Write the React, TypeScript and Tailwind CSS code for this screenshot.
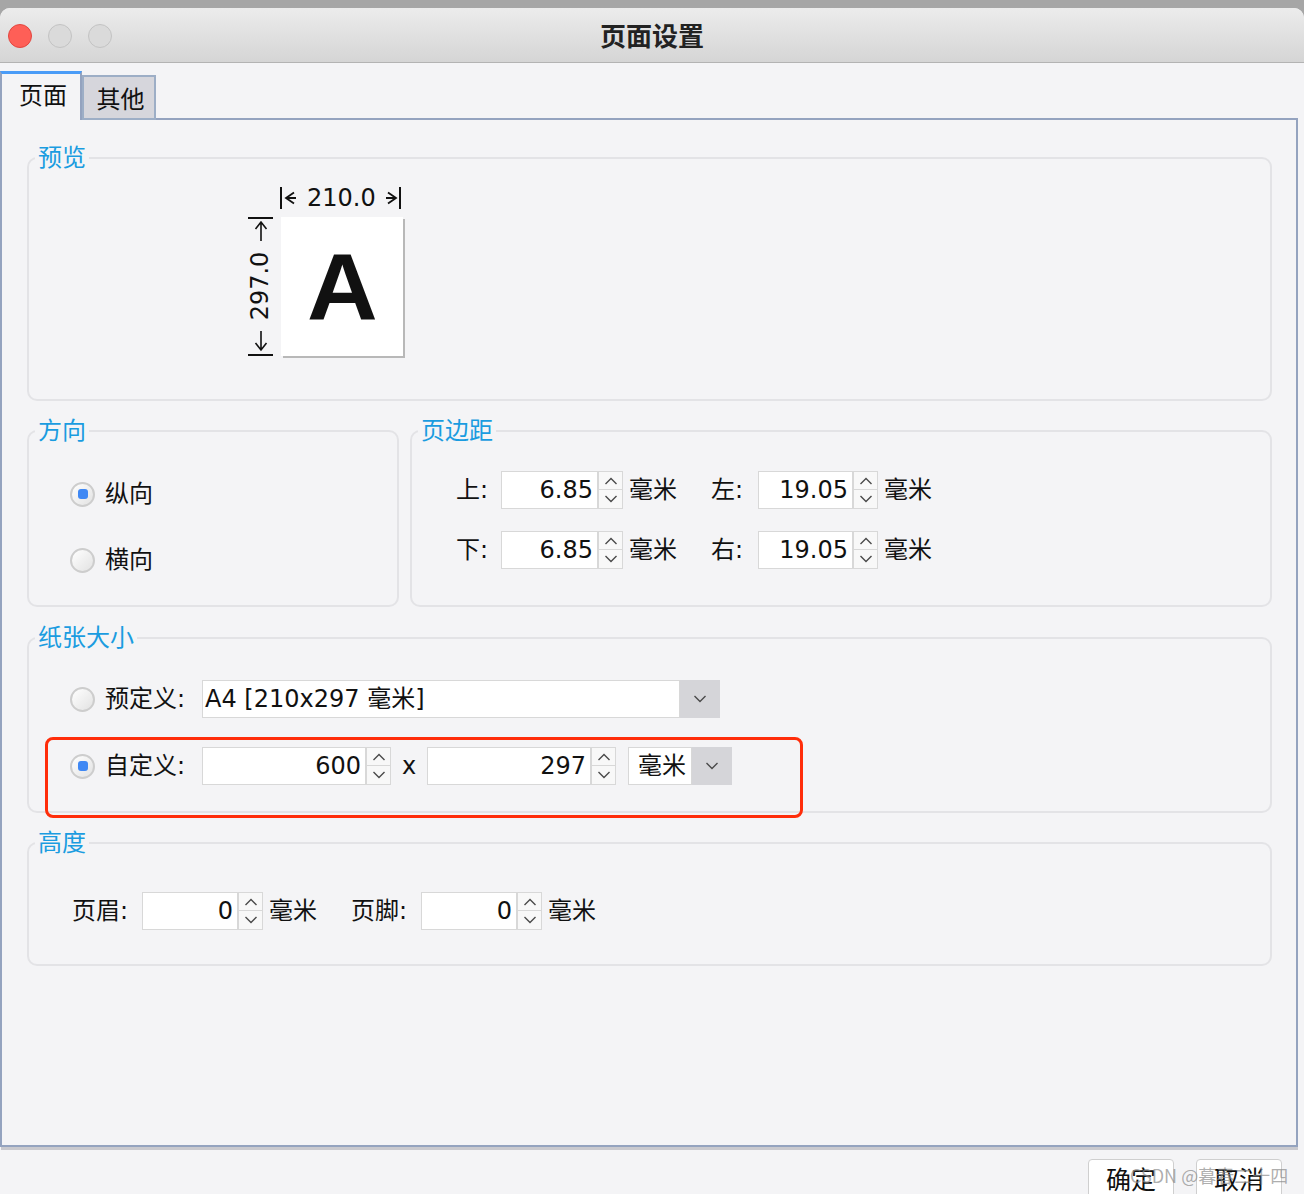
import React from 'react'

// Small chevron used by spinners and combo boxes
function Chevron({ up = false }: { up?: boolean }) {
  return (
    <svg width="14" height="8" viewBox="0 0 14 8" className="block">
      <path
        d={up ? 'M1.5 7 L7 1.5 L12.5 7' : 'M1.5 1 L7 6.5 L12.5 1'}
        fill="none"
        stroke="#4a4a4a"
        strokeWidth="1.4"
      />
    </svg>
  )
}

function Radio({ checked = false }: { checked?: boolean }) {
  return (
    <span className="w-[25px] h-[25px] rounded-full border-2 border-[#cdcdcd] bg-linear-to-br from-white to-[#e2e2e2] flex items-center justify-center shrink-0">
      {checked && <span className="w-[10px] h-[10px] rounded-[3px] bg-[#3f88f4]" />}
    </span>
  )
}

function Spinner({ value, fieldClass }: { value: string; fieldClass: string }) {
  return (
    <div className="flex h-[38px]">
      <div className={`${fieldClass} h-full bg-white border border-[#d8d8d8] flex items-center justify-end pr-[4px]`}>
        {value}
      </div>
      <div className="w-[25px] h-full flex flex-col">
        <div className="h-1/2 bg-[#f8f8f8] border border-[#d8d8d8] flex items-center justify-center">
          <Chevron up />
        </div>
        <div className="h-1/2 bg-[#f8f8f8] border border-t-0 border-[#d8d8d8] flex items-center justify-center">
          <Chevron />
        </div>
      </div>
    </div>
  )
}

function Group({
  title,
  className = '',
  children,
}: {
  title: string
  className?: string
  children: React.ReactNode
}) {
  return (
    <fieldset className={`shrink-0 border-2 border-[#e3e3e6] rounded-[10px] ${className}`}>
      <legend className="ml-[6px] px-[3px] text-[24px] leading-[30px] text-[#1a9ce0]">{title}</legend>
      {children}
    </fieldset>
  )
}

function HArrow({ left = false }: { left?: boolean }) {
  return (
    <svg width="14" height="16" viewBox="0 0 14 16" className="block">
      <path
        d={left ? 'M2 8 H12 M10 2.5 L2 8 L10 13.5' : 'M2 8 H12 M4 2.5 L12 8 L4 13.5'}
        fill="none"
        stroke="#111"
        strokeWidth="1.8"
      />
    </svg>
  )
}

function VArrow({ up = false }: { up?: boolean }) {
  return (
    <svg width="16" height="22" viewBox="0 0 16 22" className="block">
      <path
        d={up ? 'M8 2 V21 M2.5 9 L8 2 L13.5 9' : 'M8 1 V20 M2.5 13 L8 20 L13.5 13'}
        fill="none"
        stroke="#111"
        strokeWidth="1.6"
      />
    </svg>
  )
}

function Preview() {
  return (
    <div className="pl-[219px] pt-[13px]">
      <div className="flex items-center h-[24px] ml-[32px]">
        <span className="w-[2px] h-[22px] bg-[#111]" />
        <span className="ml-[2px]"><HArrow left /></span>
        <span className="ml-[9px] leading-[24px]">210.0</span>
        <span className="ml-[8px]"><HArrow /></span>
        <span className="ml-[1px] w-[2px] h-[22px] bg-[#111]" />
      </div>
      <div className="flex mt-[7px]">
        <div className="w-[25px] h-[139px] flex flex-col items-center">
          <span className="w-[25px] h-[2px] bg-[#111]" />
          <span className="mt-[1px]"><VArrow up /></span>
          <div className="h-[88px] w-[25px] flex items-center justify-center">
            <span className="-rotate-90 whitespace-nowrap leading-[24px]">297.0</span>
          </div>
          <span><VArrow /></span>
          <span className="mt-auto w-[25px] h-[2px] bg-[#111]" />
        </div>
        <div className="ml-[8px] w-[122px] h-[139px] bg-white shadow-[2px_2px_0_#b8b8b8] flex items-center justify-center">
          <span className="font-['Liberation_Sans',sans-serif] font-bold text-[95px] leading-none mt-[2px] scale-x-[1.03]">A</span>
        </div>
      </div>
    </div>
  )
}

export default function App() {
  return (
    <div className="relative w-[1304px] h-[1194px] overflow-hidden bg-[#a6a6a6] text-[#111] text-[24px] font-['DejaVu_Sans','Noto_Sans_CJK_SC',sans-serif]">
      <div className="h-[8px]" />
      <div className="h-[1186px] rounded-t-[10px] bg-[#f4f4f6] flex flex-col overflow-hidden">
        {/* Title bar */}
        <div className="relative h-[55px] shrink-0 bg-linear-to-b from-[#ececec] to-[#d5d5d5] border-b border-[#b3b3b3] flex items-center">
          <div className="flex items-center gap-[16px] pl-[8px] pt-[2px]">
            <span className="w-[24px] h-[24px] rounded-full bg-[#fe5f57] border border-[#e2463f]" />
            <span className="w-[24px] h-[24px] rounded-full bg-[#dadada] border border-[#c3c3c3]" />
            <span className="w-[24px] h-[24px] rounded-full bg-[#dadada] border border-[#c3c3c3]" />
          </div>
          <div className="absolute inset-0 flex items-center justify-center pb-[1px] font-['Noto_Sans_CJK_SC',sans-serif] font-bold text-[26px] text-[#222]">
            页面设置
          </div>
        </div>

        {/* Tabs */}
        <div className="mt-[8px] h-[49px] flex shrink-0 mr-[6px]">
          <div className="w-[82px] h-full border-t-[3px] border-t-[#4a9cf7] border-l-2 border-r-2 border-[#94a3bf] flex items-center justify-center pl-[4px] pb-[2px]">
            页面
          </div>
          <div className="w-[74px] mt-[4px] h-[45px] bg-[#d6d6dc] border-2 border-[#9daec6] flex items-center justify-center pl-[3px] pt-[4px]">
            其他
          </div>
          <div className="flex-1 border-b-2 border-[#94a3bf]" />
        </div>

        {/* Panel */}
        <div className="h-[1027px] shrink-0 mr-[6px] border-l-2 border-r-2 border-b-2 border-[#94a3bf] pt-[23px] pl-[25px] pr-[24px] flex flex-col">
          <Group title="预览" className="h-[258px]">
            <Preview />
          </Group>

          <div className="flex gap-[11px] mt-[15px] shrink-0">
            <Group title="方向" className="w-[372px] h-[191px]">
              <div className="pl-[41px] pt-[28px] flex flex-col gap-[26px]">
                <label className="flex items-center gap-[10px] h-[40px]">
                  <Radio checked />
                  <span>纵向</span>
                </label>
                <label className="flex items-center gap-[10px] h-[40px]">
                  <Radio />
                  <span>横向</span>
                </label>
              </div>
            </Group>

            <Group title="页边距" className="flex-1 h-[191px]">
              <div className="pl-[44px] pt-[25px] flex flex-col gap-[22px]">
                <div className="flex items-center">
                  <span className="w-[45px]">上:</span>
                  <Spinner value="6.85" fieldClass="w-[97px]" />
                  <span className="ml-[6px]">毫米</span>
                  <span className="ml-[34px] w-[47px]">左:</span>
                  <Spinner value="19.05" fieldClass="w-[95px]" />
                  <span className="ml-[6px]">毫米</span>
                </div>
                <div className="flex items-center">
                  <span className="w-[45px]">下:</span>
                  <Spinner value="6.85" fieldClass="w-[97px]" />
                  <span className="ml-[6px]">毫米</span>
                  <span className="ml-[34px] w-[47px]">右:</span>
                  <Spinner value="19.05" fieldClass="w-[95px]" />
                  <span className="ml-[6px]">毫米</span>
                </div>
              </div>
            </Group>
          </div>

          <Group title="纸张大小" className="h-[190px] mt-[16px]">
            <div className="pl-[41px] pt-[27px] flex flex-col gap-[29px]">
              <div className="flex items-center">
                <Radio />
                <span className="ml-[10px] w-[97px]">预定义:</span>
                <div className="flex h-[38px]">
                  <div className="w-[478px] h-full bg-white border border-[#d8d8d8] flex items-center pl-[2px]">
                    A4 [210x297 毫米]
                  </div>
                  <div className="w-[40px] h-full bg-[#d5d5d9] flex items-center justify-center">
                    <Chevron />
                  </div>
                </div>
              </div>
              <div className="flex items-center">
                <Radio checked />
                <span className="ml-[10px] w-[97px]">自定义:</span>
                <Spinner value="600" fieldClass="w-[164px]" />
                <span className="w-[36px] text-center">x</span>
                <Spinner value="297" fieldClass="w-[164px]" />
                <div className="ml-[12px] flex h-[38px]">
                  <div className="w-[64px] h-full bg-white border border-[#d8d8d8] flex items-center pl-[9px]">
                    毫米
                  </div>
                  <div className="w-[40px] h-full bg-[#d5d5d9] flex items-center justify-center">
                    <Chevron />
                  </div>
                </div>
              </div>
            </div>
          </Group>

          <Group title="高度" className="h-[138px] mt-[15px]">
            <div className="pl-[43px] pt-[34px] flex items-center">
              <span className="w-[70px]">页眉:</span>
              <Spinner value="0" fieldClass="w-[96px]" />
              <span className="ml-[6px]">毫米</span>
              <span className="ml-[34px] w-[70px]">页脚:</span>
              <Spinner value="0" fieldClass="w-[96px]" />
              <span className="ml-[6px]">毫米</span>
            </div>
          </Group>
        </div>
        <div className="h-[3px] shrink-0 ml-[1px] mr-[6px] bg-[#c9c9ce]" />

        {/* Buttons */}
        <div className="mt-[9px] shrink-0 flex justify-end gap-[22px] pr-[22px]">
          <button className="w-[86px] h-[44px] bg-white border border-[#cfcfcf] rounded-[4px] flex items-center justify-center text-[25px]">
            确定
          </button>
          <button className="w-[86px] h-[44px] bg-white border border-[#cfcfcf] rounded-[4px] flex items-center justify-center text-[25px]">
            取消
          </button>
        </div>
      </div>

      {/* annotation frame */}
      <div className="absolute left-[45px] top-[737px] w-[758px] h-[81px] border-[3px] border-[#ff2d0a] rounded-[8px] pointer-events-none" />
      {/* watermark */}
      <span className="absolute left-[1130px] top-[1163px] text-[18px] leading-[24px] font-['Noto_Sans_CJK_SC',sans-serif] text-[#8a8a8a]/70 whitespace-nowrap pointer-events-none">
        CSDN @暮春二十四
      </span>
    </div>
  )
}
